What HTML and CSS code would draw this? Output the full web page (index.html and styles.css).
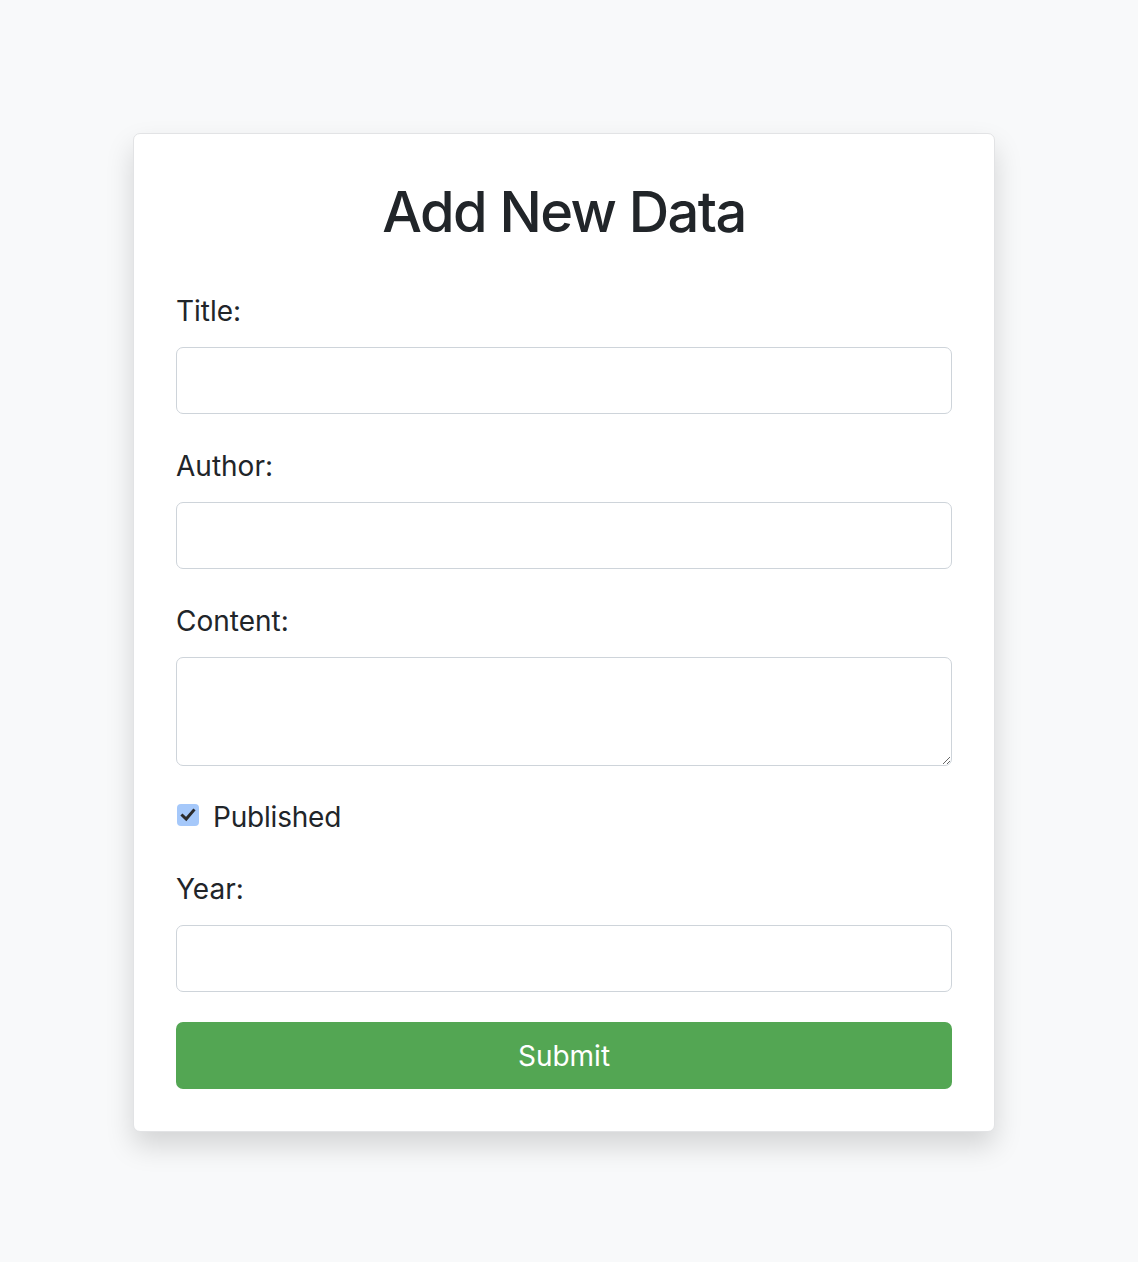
FILE: index.html
```html
<!DOCTYPE html>
<html lang="en">
<head>
<meta charset="utf-8">
<title>Add New Data</title>
<link rel="stylesheet" href="styles.css">
</head>
<body>
<div class="page">
  <div class="card">
    <h2 class="card-title">Add New Data</h2>
    <form class="form">
      <div class="group">
        <label class="label" for="title">Title:</label>
        <input class="control" id="title" type="text">
      </div>
      <div class="group">
        <label class="label" for="author">Author:</label>
        <input class="control" id="author" type="text">
      </div>
      <div class="group">
        <label class="label" for="content">Content:</label>
        <textarea class="control area" id="content"></textarea>
      </div>
      <div class="check-row">
        <span class="check-box">
          <svg viewBox="0 0 22 22" width="22" height="22"><path d="M5.5 11.5 L9.2 15 L16.5 6.5" fill="none" stroke="#2b2b2b" stroke-width="3" stroke-linecap="square" stroke-linejoin="miter"/></svg>
        </span>
        <span class="check-label">Published</span>
      </div>
      <div class="group last">
        <label class="label" for="year">Year:</label>
        <input class="control" id="year" type="text">
      </div>
      <button class="submit" type="button">Submit</button>
    </form>
  </div>
</div>
</body>
</html>
```
FILE: styles.css
```css
* { box-sizing: border-box; }
html, body {
  margin: 0;
  padding: 0;
  background: #f8f9fa;
  font-family: Inter, "Noto Sans", "Liberation Sans", sans-serif;
  color: #212529;
}
.page {
  padding: 133px 0 130px 133px;
}
.card {
  width: 862px;
  background: #fff;
  border: 1px solid #e2e3e5;
  border-radius: 7px;
  box-shadow: 0 14px 28px rgba(0, 0, 0, 0.15);
  padding: 42px;
}
.card-title {
  margin: 3px 0 44px;
  font-size: 56px;
  line-height: 67px;
  font-weight: 500;
  text-align: center;
  letter-spacing: -1.6px;
}
.form { display: flex; flex-direction: column; }
.group {
  display: flex;
  flex-direction: column;
  margin-bottom: 31px;
}
.group.last { margin-bottom: 30px; }
.label {
  font-size: 28px;
  line-height: 42px;
  margin-bottom: 15px;
}
.control {
  display: block;
  width: 100%;
  height: 67px;
  border: 1px solid #ced4da;
  border-radius: 7px;
  background: #fff;
  font-family: inherit;
  font-size: 28px;
  padding: 10px 21px;
  color: #495057;
  outline: none;
}
.area {
  height: 109px;
  resize: vertical;
}
.check-row {
  display: flex;
  align-items: flex-start;
  height: 42px;
  margin-top: -1px;
  margin-bottom: 30px;
}
.check-box {
  width: 22px;
  height: 22px;
  margin-top: 8px;
  margin-left: 1px;
  border-radius: 4px;
  background: #a5c8fa;
  display: flex;
}
.check-label {
  font-size: 28px;
  line-height: 42px;
  margin-left: 14px;
  letter-spacing: -0.2px;
}
.submit {
  width: 100%;
  height: 67px;
  border: none;
  border-radius: 7px;
  background: #53a653;
  color: #fff;
  font-family: inherit;
  font-size: 28px;
  line-height: 42px;
  padding: 0;
}
```
